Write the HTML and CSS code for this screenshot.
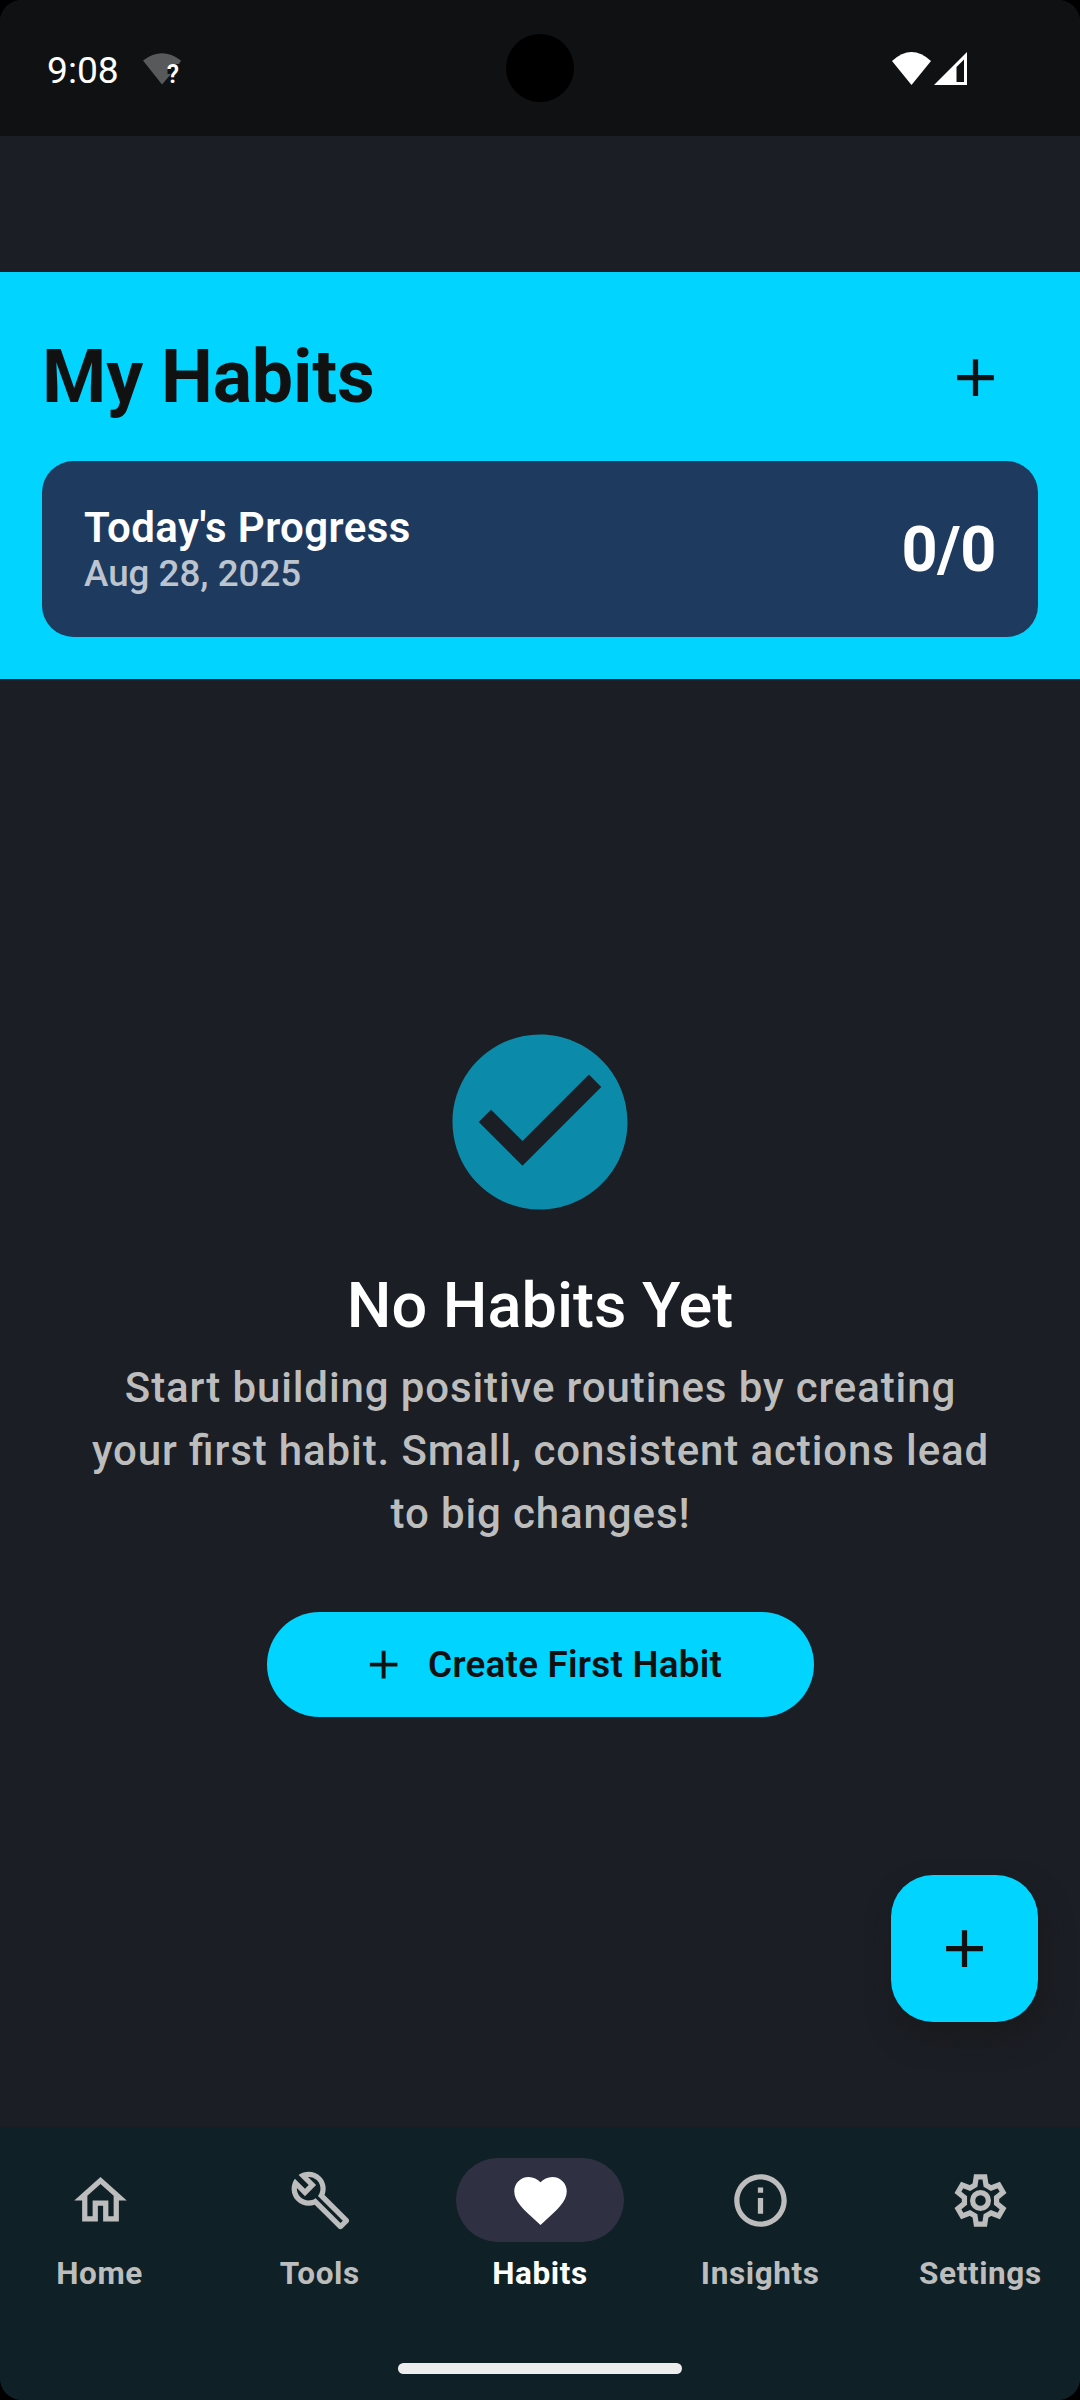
FILE: index.html
```html
<!DOCTYPE html>
<html lang="en">
<head>
<meta charset="utf-8">
<title>My Habits</title>
<link rel="stylesheet" href="styles.css">
</head>
<body>
<div class="screen">
  <div class="status-bar">
    <div class="status-left">
      <span class="clock">9:08</span>
      <span class="net-unknown">
        <svg class="wifi-dim" width="39" height="32" viewBox="0 0 39 32"><path d="M0 7.500Q19 -7 38 7.500L36 11H28Q24.500 12 24.500 17V21H28L19 31.500Z" fill="#58595b"/></svg>
        <span class="question">?</span>
      </span>
    </div>
    <div class="camera"></div>
    <div class="status-right">
      <svg width="39" height="33" viewBox="0 0 39 33"><path d="M0 9Q19.500 -9 39 9L19.500 33Z" fill="#fff"/></svg>
      <svg width="33" height="33" viewBox="0 0 33 33"><path fill-rule="evenodd" d="M33 0V33H0ZM30 7.500L22.500 15V30H30Z" fill="#fff"/></svg>
    </div>
  </div>

  <header class="header">
    <div class="title-row">
      <h1 class="title">My Habits</h1>
      <button class="icon-button" aria-label="Add habit"><svg class="icon" viewBox="0 0 24 24"><path d="M19 13h-6v6h-2v-6H5v-2h6V5h2v6h6v2z"/></svg></button>
    </div>
    <section class="progress-card">
      <div class="progress-text">
        <div class="progress-title">Today's Progress</div>
        <div class="progress-date">Aug 28, 2025</div>
      </div>
      <div class="progress-count">0/0</div>
    </section>
  </header>

  <main class="empty">
    <svg class="empty-icon" viewBox="0 0 24 24"><path d="M12 2C6.480 2 2 6.480 2 12s4.480 10 10 10 10-4.480 10-10S17.520 2 12 2zm-2 15l-5-5 1.410-1.410L10 14.170l7.590-7.590L19 8l-9 9z"/></svg>
    <h2 class="empty-title">No Habits Yet</h2>
    <p class="empty-body">Start building positive routines by creating<br>your first habit. Small, consistent actions lead<br>to big changes!</p>
    <button class="create-button"><svg class="icon small" viewBox="0 0 24 24"><path d="M19 13h-6v6h-2v-6H5v-2h6V5h2v6h6v2z"/></svg><span>Create First Habit</span></button>
    <button class="fab" aria-label="Create habit"><svg class="icon" viewBox="0 0 24 24"><path d="M19 13h-6v6h-2v-6H5v-2h6V5h2v6h6v2z"/></svg></button>
  </main>

  <footer class="bottom">
    <nav class="nav">
      <a class="nav-item"><span class="indicator"><svg class="icon" viewBox="0 0 24 24"><path d="M12 5.690l5 4.500V18h-2v-6H9v6H7v-7.810l5-4.500M12 3L2 12h3v8h6v-6h2v6h6v-8h3L12 3z"/></svg></span><span class="label">Home</span></a>
      <a class="nav-item"><span class="indicator"><svg class="icon" viewBox="0 0 24 24"><path d="M22.610 18.990l-9.080-9.080c.93-2.340.45-5.100-1.440-7C9.790.61 6.210.4 3.660 2.260L7.500 6.110 6.080 7.520 2.250 3.690C.39 6.230.6 9.820 2.900 12.110c1.860 1.860 4.570 2.350 6.890 1.480l9.110 9.110c.39.39 1.020.39 1.410 0l2.300-2.300c.4-.38.4-1.010 0-1.410zm-3 1.600l-9.460-9.460c-.61.45-1.290.72-2 .82-1.360.2-2.790-.21-3.830-1.250C3.370 9.760 2.930 8.500 3 7.260l3.090 3.090 4.240-4.240-3.090-3.090c1.240-.07 2.490.37 3.440 1.310 1.080 1.080 1.490 2.570 1.240 3.960-.12.71-.42 1.370-.88 1.960l9.450 9.450-.88.89z"/></svg></span><span class="label">Tools</span></a>
      <a class="nav-item active"><span class="indicator"><svg class="icon" viewBox="0 0 24 24"><path d="M12 21.350l-1.450-1.320C5.400 15.360 2 12.280 2 8.500 2 5.420 4.420 3 7.500 3c1.740 0 3.410.81 4.500 2.090C13.090 3.810 14.760 3 16.500 3 19.580 3 22 5.420 22 8.500c0 3.780-3.400 6.860-8.550 11.540L12 21.350z"/></svg></span><span class="label">Habits</span></a>
      <a class="nav-item"><span class="indicator"><svg class="icon" viewBox="0 0 24 24"><path d="M11 7h2v2h-2zm0 4h2v6h-2zm1-9C6.480 2 2 6.480 2 12s4.480 10 10 10 10-4.480 10-10S17.520 2 12 2zm0 18c-4.410 0-8-3.590-8-8s3.590-8 8-8 8 3.590 8 8-3.590 8-8 8z"/></svg></span><span class="label">Insights</span></a>
      <a class="nav-item"><span class="indicator"><svg class="icon gear" viewBox="0 0 24 24"><path d="M10.380 3H13.620L14.100 6.150L16.020 7.260L18.980 6.100L20.600 8.900L18.120 10.890V13.110L20.600 15.100L18.980 17.900L16.020 16.740L14.100 17.850L13.620 21H10.380L9.900 17.850L7.980 16.740L5.020 17.900L3.400 15.100L5.880 13.110V10.890L3.400 8.900L5.020 6.100L7.980 7.260L9.900 6.150Z"/><circle cx="12" cy="12" r="3"/></svg></span><span class="label">Settings</span></a>
    </nav>
    <div class="handle"></div>
  </footer>
</div>
</body>
</html>
```
FILE: styles.css
```css
* { box-sizing: border-box; }
html { background: #000; }
body { margin: 0; background: #000; font-family: Roboto, sans-serif; }
h1, h2, p { margin: 0; }
button { border: 0; padding: 0; font: inherit; color: #111; background: none; }
svg { display: block; flex: none; }

.screen {
  width: 1080px; height: 2400px; overflow: hidden;
  display: flex; flex-direction: column;
  border-radius: 22px; background: #1b1e25;
}
.icon { width: 63px; height: 63px; fill: currentColor; }
.icon.small { width: 47.25px; height: 47.25px; }

.status-bar {
  height: 136px; flex: none; background: #101113; color: #fff;
  display: grid; grid-template-columns: 1fr 68px 1fr; align-items: center;
}
.status-left { display: flex; align-items: center; padding-left: 47px; gap: 24px; }
.clock { font-size: 37.2px; line-height: 44px; padding-top: 3px; }
.net-unknown { position: relative; padding-top: 1px; }
.question { position: absolute; left: 24px; top: 10px; font-size: 25px; line-height: 26px; font-weight: 600; }
.camera { width: 68px; height: 68px; border-radius: 50%; background: #000; }
.status-right { display: flex; justify-content: flex-end; padding-right: 113px; gap: 3px; }

.header {
  margin-top: 136px; height: 407px; flex: none; padding: 42px;
  background: #00d4ff; display: flex; flex-direction: column; gap: 21px;
}
.title-row { display: flex; align-items: center; justify-content: space-between; height: 126px; }
.title { font-size: 73.5px; font-weight: 700; line-height: 94px; letter-spacing: -0.2px; color: #111; }
.icon-button { width: 126px; height: 126px; display: grid; place-items: center; }
.progress-card {
  height: 176px; border-radius: 31.5px; background: #1e3a5f; color: #fff; padding: 0 42px;
  display: flex; align-items: center; justify-content: space-between;
}
.progress-title { font-size: 42px; font-weight: 600; line-height: 49px; letter-spacing: 0.4px; }
.progress-date { font-size: 36.75px; font-weight: 500; line-height: 43px; color: #bcc4cf; }
.progress-count { font-size: 63px; font-weight: 700; line-height: 74px; letter-spacing: -0.4px; padding-top: 2px; }

.empty { flex: 1; position: relative; display: flex; flex-direction: column; align-items: center; padding-top: 338px; }
.empty-icon { width: 210px; height: 210px; fill: #0b8ba9; }
.empty-title { margin-top: 42px; font-size: 63px; font-weight: 500; line-height: 74px; color: #fff; }
.empty-body {
  margin-top: 13px; font-size: 42px; font-weight: 500; line-height: 63px; letter-spacing: 0.88px;
  font-feature-settings: "liga" 1; text-align: center; color: #bdbdbd; padding-left: 1px;
}
.create-button {
  margin-top: 67px; width: 547px; height: 105px; border-radius: 52.5px; background: #00d4ff;
  display: flex; align-items: center; justify-content: center; gap: 21px; padding-left: 2px;
  font-size: 36.75px; font-weight: 600; letter-spacing: 0.26px;
}
.fab {
  position: absolute; right: 42px; bottom: 105px; width: 147px; height: 147px;
  border-radius: 42px; background: #00d4ff; display: grid; place-items: center;
  box-shadow: 5px 16px 28px rgba(24, 24, 24, .7);
}

.bottom { height: 273px; flex: none; background: #0f2127; display: flex; flex-direction: column; align-items: center; }
.nav { width: 100%; padding-top: 31px; display: grid; grid-template-columns: repeat(5, 1fr); column-gap: 21px; }
.nav-item { display: flex; flex-direction: column; align-items: center; gap: 11px; color: #bdbdbd; }
.indicator { width: 168px; height: 84px; border-radius: 42px; display: grid; place-items: center; }
.indicator .icon { margin-left: 1px; }
.active { color: #fff; }
.active .indicator { background: #2f3042; }
.label { font-size: 31.5px; font-weight: 700; line-height: 42px; letter-spacing: 0.6px; }
.gear { fill: none; stroke: currentColor; stroke-width: 2; }
.handle { margin-top: 68px; width: 284px; height: 11px; border-radius: 5.5px; background: #ecedec; }
```
